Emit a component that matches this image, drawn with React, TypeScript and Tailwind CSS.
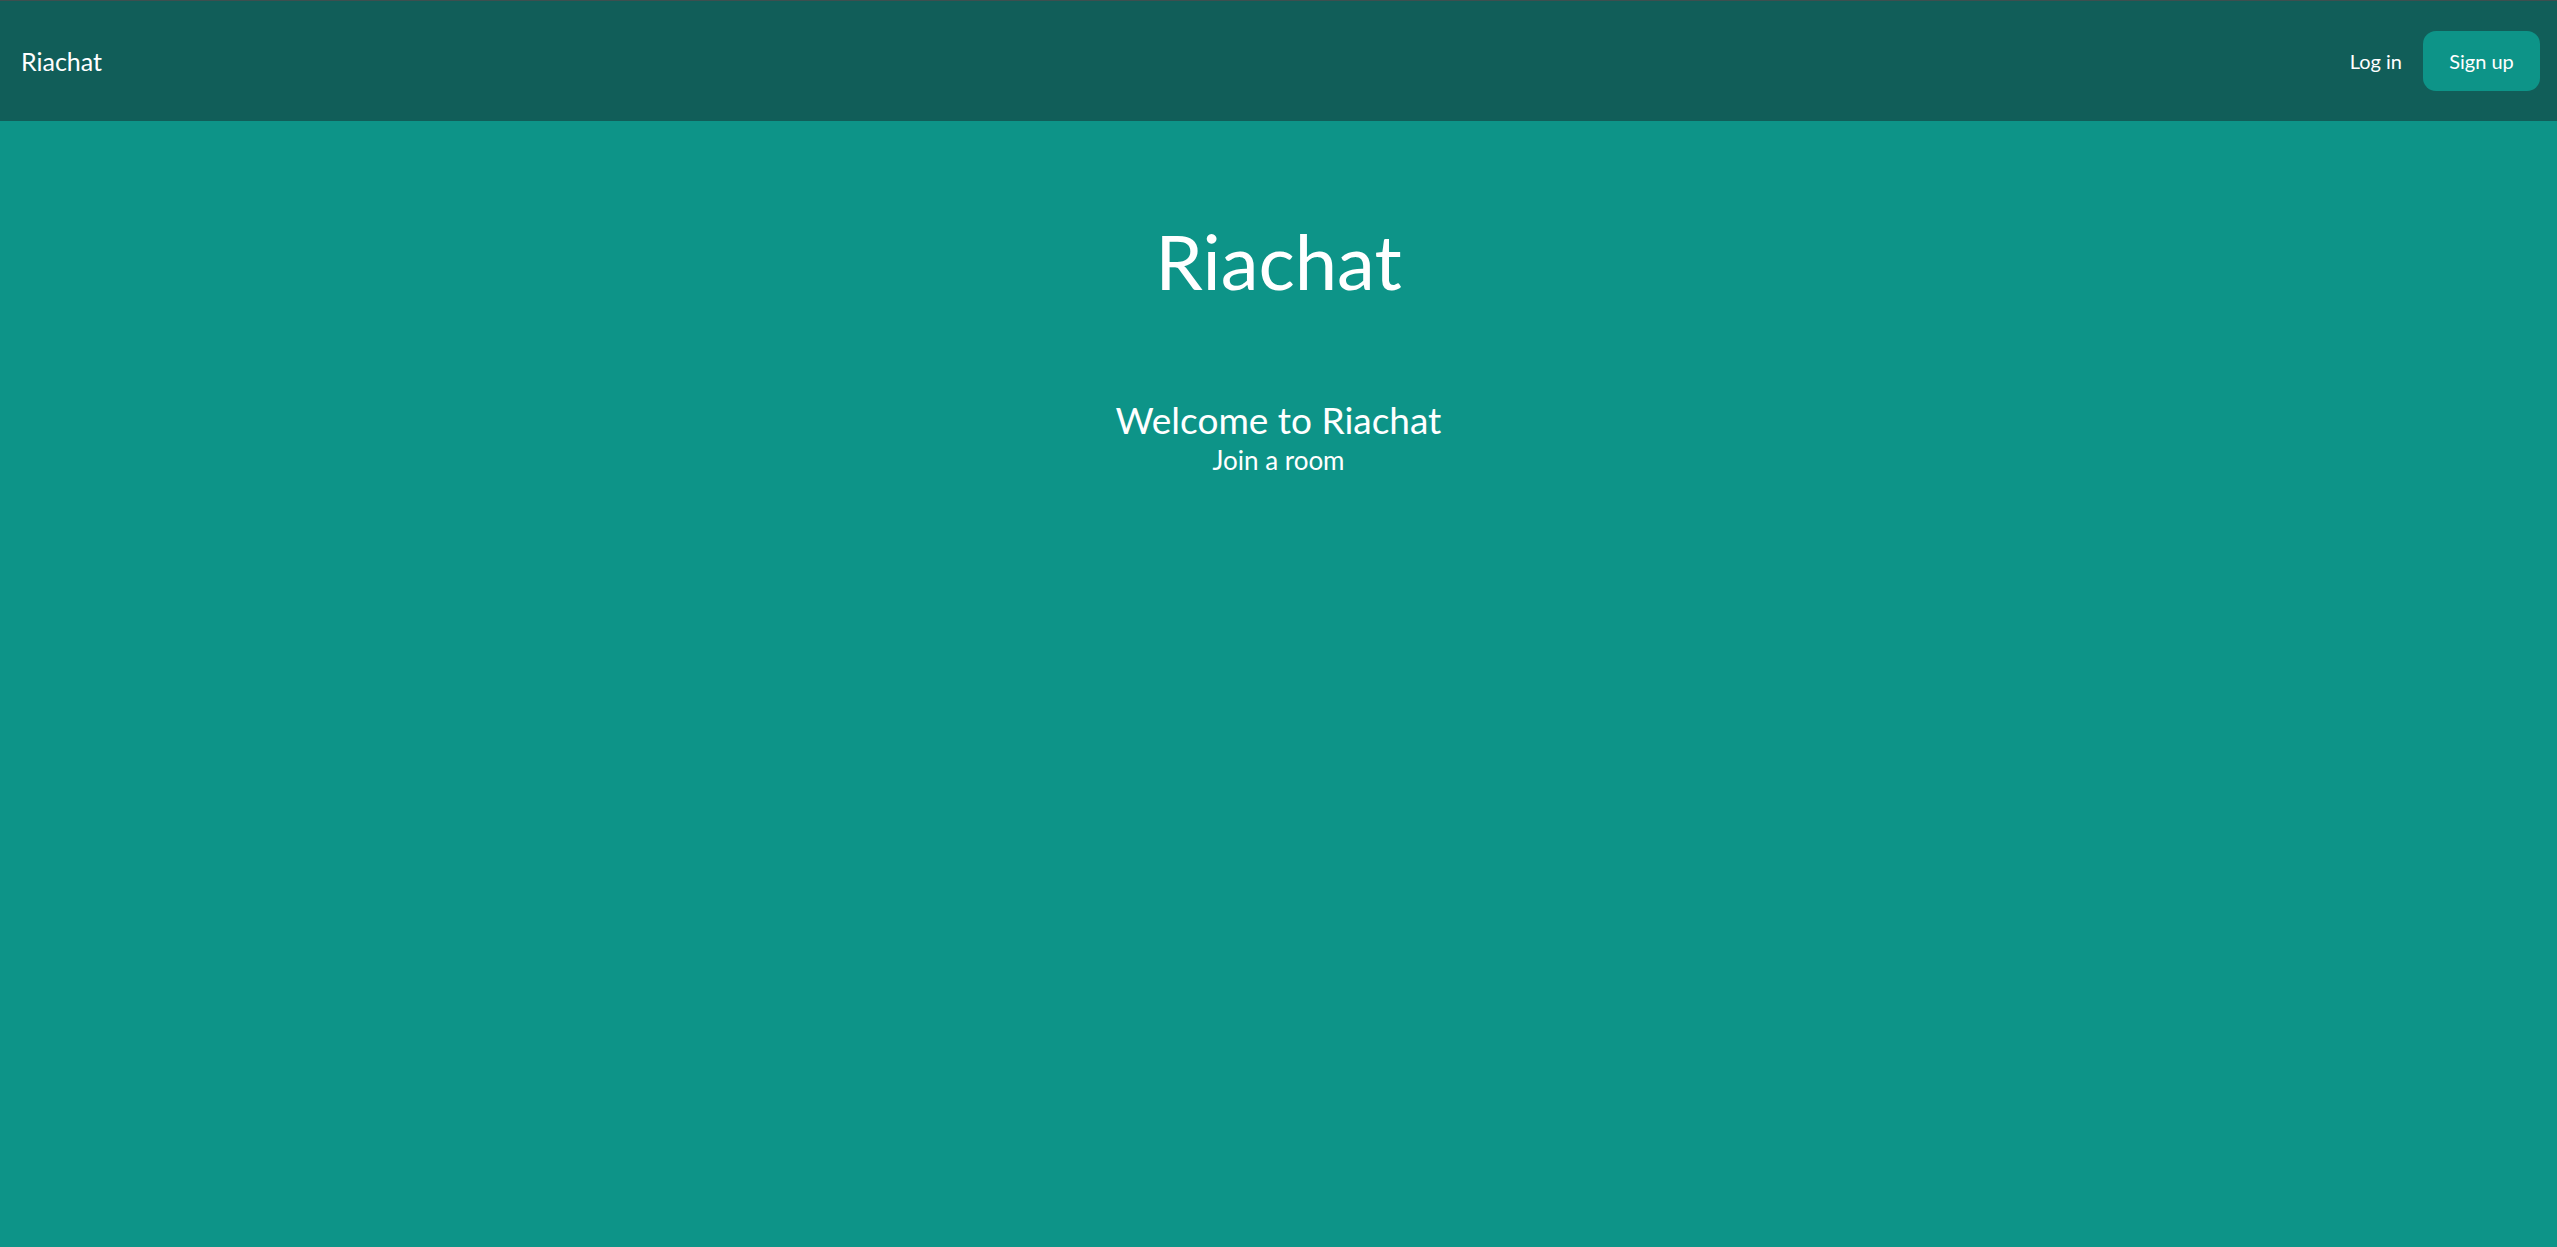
export default function App() {
  return (
    <div className="min-h-screen w-full bg-[#0d9488] text-white" style={{ fontFamily: 'Lato, "Open Sans", sans-serif' }}>
      <header className="h-[121px] border-t border-[#3d4f4f] bg-[#115e59] flex items-center justify-between pl-[21px] pr-[17px]">
        <div className="text-[25px] leading-none">Riachat</div>
        <nav className="flex items-center gap-[21px]">
          <a className="text-[20px] leading-none">Log in</a>
          <button className="h-[60px] w-[117px] rounded-[13px] bg-[#0d9488] text-[20px] leading-none text-white">Sign up</button>
        </nav>
      </header>
      <main className="flex flex-col items-center">
        <h1 className="mt-[102px] text-[76px] leading-none">Riachat</h1>
        <h2 className="mt-[102px] text-[37px] leading-none">Welcome to Riachat</h2>
        <p className="mt-[9px] text-[26px] leading-none">Join a room</p>
      </main>
    </div>
  );
}
